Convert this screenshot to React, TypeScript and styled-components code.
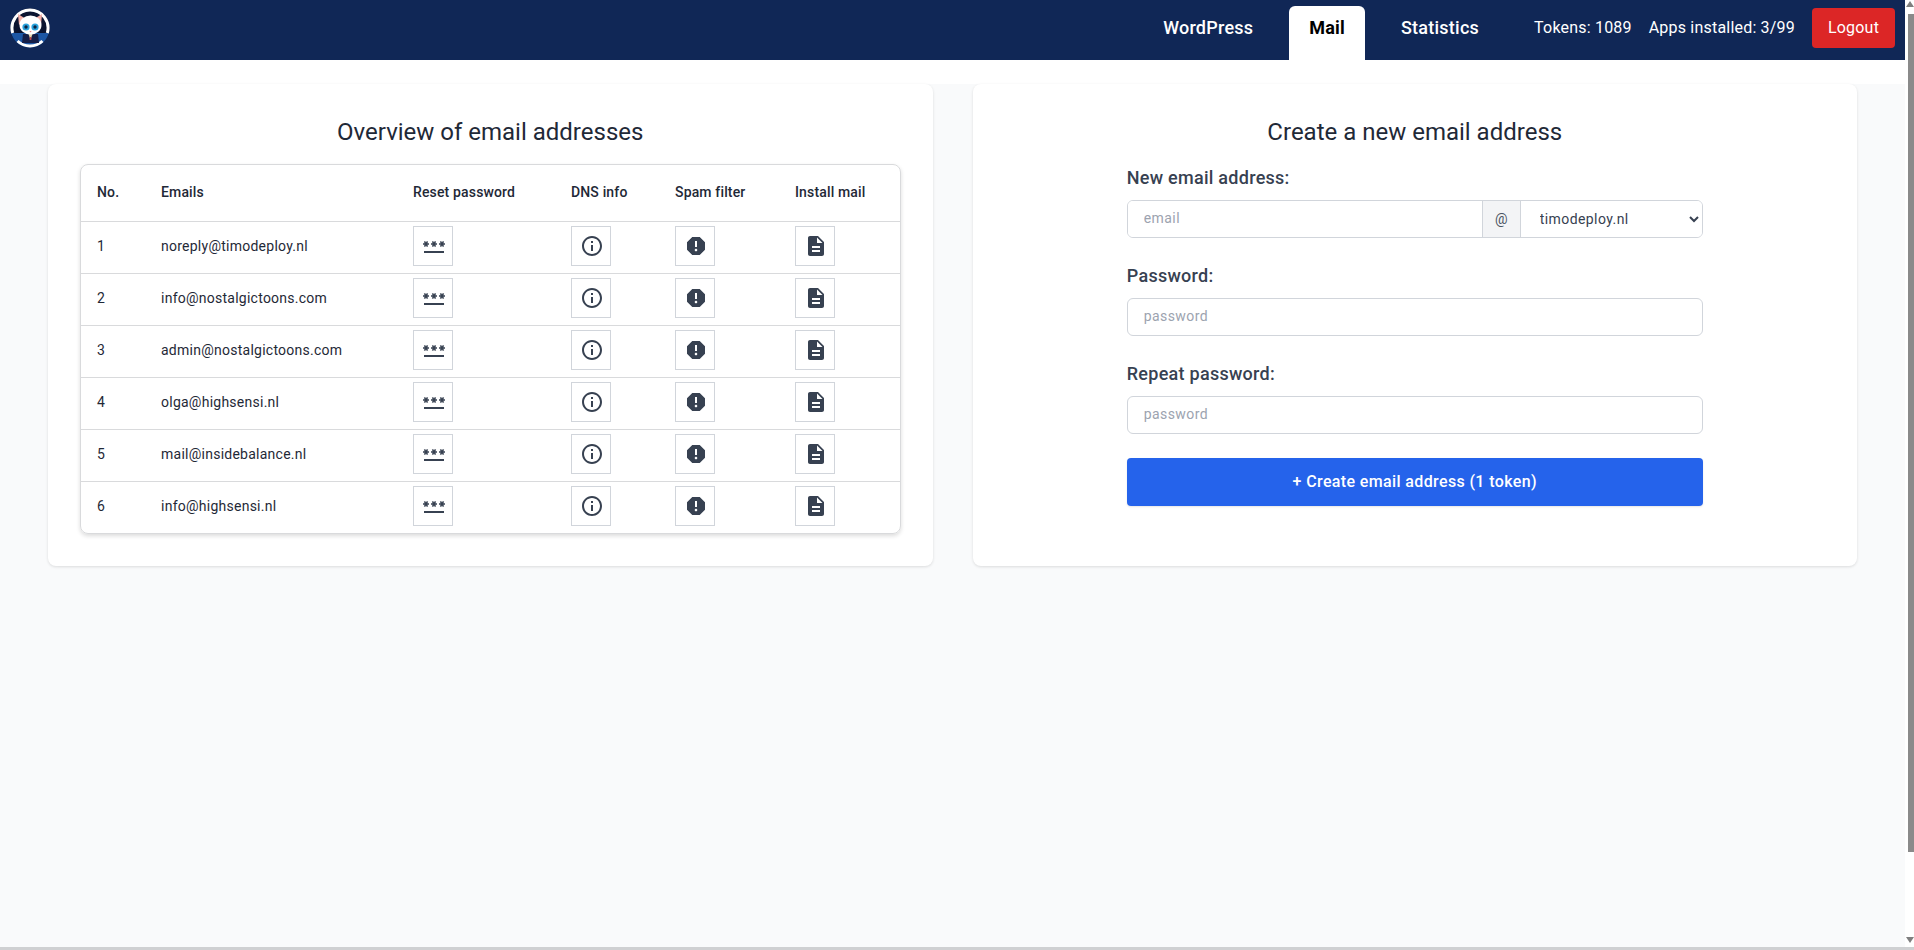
import React from "react";
import styled, { createGlobalStyle } from "styled-components";
import { MdPassword, MdInfoOutline, MdReport, MdDescription } from "react-icons/md";

const GlobalStyle = createGlobalStyle`
  html, body, #root {
    margin: 0;
    height: 100%;
  }
  body {
    overflow: hidden;
    background: #ffffff;
    font-family: Roboto, "Liberation Sans", sans-serif;
    color: #374151;
  }
  * {
    box-sizing: border-box;
  }
`;

const Window = styled.div`
  height: 950px;
  display: flex;
  flex-direction: column;
`;

const Viewport = styled.div`
  flex: 1;
  min-height: 0;
  display: flex;
`;

const WindowEdge = styled.div`
  height: 3px;
  background: #cfd0d2;
`;

const Page = styled.div`
  flex: 1;
  min-width: 0;
  display: flex;
  flex-direction: column;
  background: #f9fafb;
`;

const Rail = styled.div`
  width: 9px;
  background: #ffffff;
  display: flex;
  flex-direction: column;
  align-items: flex-end;
  padding: 1px 0 4px;
`;

const RailArrow = styled.div<{ $down?: boolean }>`
  width: 0;
  height: 0;
  border-left: 4px solid transparent;
  border-right: 4px solid transparent;
  ${p =>
    p.$down
      ? "border-top: 6px solid #7f7f7f; margin-top: auto;"
      : "border-bottom: 6px solid #7f7f7f;"}
`;

const RailThumb = styled.div`
  width: 6px;
  height: 838px;
  margin-top: 7px;
  background: #8a8a8a;
`;

const Nav = styled.nav`
  height: 60px;
  flex-shrink: 0;
  background: #102756;
  display: flex;
  align-items: flex-end;
  padding: 0 10px 0 10px;
`;

const Logo = styled.svg`
  width: 40px;
  height: 40px;
  align-self: center;
  margin-top: -4px;
`;

const Tabs = styled.div`
  margin-left: auto;
  display: flex;
  gap: 16px;
  align-items: flex-end;
`;

const Tab = styled.a<{ $active?: boolean }>`
  height: 54px;
  padding: 0 20px 12px;
  display: flex;
  align-items: center;
  font-size: 18px;
  font-weight: ${p => (p.$active ? 700 : 500)};
  letter-spacing: ${p => (p.$active ? "0.15px" : "0.25px")};
  color: ${p => (p.$active ? "#000000" : "#ffffff")};
  background: ${p => (p.$active ? "#ffffff" : "transparent")};
  border-radius: 6px 6px 0 0;
`;

const NavInfo = styled.div`
  margin-left: 35px;
  align-self: center;
  display: flex;
  align-items: center;
  gap: 17px;
  margin-top: -4px;
  font-size: 16px;
  letter-spacing: 0.2px;
  color: #ffffff;
`;

const NavText = styled.span`
  padding-bottom: 2px;
`;

const LogoutButton = styled.button`
  width: 83px;
  height: 40px;
  padding: 0 0 2px;
  border: 0;
  border-radius: 4px;
  background: #dc2626;
  color: #ffffff;
  font-family: inherit;
  font-size: 16px;
  font-weight: 400;
  letter-spacing: 0.22px;
`;

const WhiteStrip = styled.div`
  height: 24px;
  flex-shrink: 0;
  background: #ffffff;
`;

const Cards = styled.main`
  display: grid;
  grid-template-columns: 1fr 1fr;
  gap: 40px;
  padding: 0 48px;
`;

const Card = styled.section`
  height: 482px;
  padding: 32px;
  background: #ffffff;
  border-radius: 8px;
  box-shadow: 0 1px 3px rgba(0, 0, 0, 0.12);
`;

const CardTitle = styled.h2`
  margin: 0 0 16px;
  font-size: 24px;
  line-height: 32px;
  font-weight: 400;
  text-align: center;
  color: #1f2937;
`;

const TableWrap = styled.div`
  border: 1px solid #d9dadc;
  border-radius: 8px;
  box-shadow: 0 2px 4px rgba(0, 0, 0, 0.14);
  overflow: hidden;
`;

const Table = styled.table`
  width: 100%;
  border-collapse: collapse;
  table-layout: fixed;
  font-size: 14px;
`;

const HeadCell = styled.th<{ $width?: number }>`
  width: ${p => (p.$width ? `${p.$width}px` : "auto")};
  height: 56px;
  padding: 0 16px 2px;
  text-align: left;
  font-weight: 500;
  letter-spacing: 0.01071em;
  color: #1f2937;
  white-space: nowrap;
`;

const Row = styled.tr`
  border-top: 1px solid #d9dadc;
`;

const Cell = styled.td`
  height: 52px;
  padding: 0 16px 2px;
  color: #1f2937;
  letter-spacing: 0.25px;
  vertical-align: middle;
`;

const IconButton = styled.button`
  width: 40px;
  height: 40px;
  padding: 0 0 0 2px;
  display: flex;
  align-items: center;
  justify-content: center;
  background: #ffffff;
  border: 1px solid #d1d5db;
  color: #374151;
  font-size: 24px;
`;

const Form = styled.form`
  width: 576px;
  margin: 0 auto;
`;

const Field = styled.div`
  margin-bottom: 24px;
`;

const Label = styled.label`
  display: block;
  margin-bottom: 8px;
  font-size: 18px;
  line-height: 28px;
  font-weight: 500;
  letter-spacing: 0.27px;
  color: #374151;
`;

const Input = styled.input`
  display: block;
  width: 100%;
  height: 38px;
  padding: 0 16px 2px;
  border: 1px solid #d1d5db;
  border-radius: 6px;
  background: #ffffff;
  font-family: inherit;
  font-size: 14px;
  letter-spacing: 0.03em;
  &::placeholder {
    color: #9ca3af;
    opacity: 1;
  }
`;

const InputGroup = styled.div`
  display: flex;
  height: 38px;
  border: 1px solid #d1d5db;
  border-radius: 6px;
  overflow: hidden;
`;

const GroupInput = styled(Input)`
  flex: 1;
  min-width: 0;
  height: 100%;
  border: 0;
  border-radius: 0;
`;

const AtSign = styled.span`
  width: 39px;
  display: flex;
  align-items: center;
  justify-content: center;
  background: #f3f4f6;
  border-left: 1px solid #d1d5db;
  border-right: 1px solid #d1d5db;
  font-size: 14px;
  color: #4b5563;
`;

const DomainSelect = styled.select`
  width: 181px;
  height: 100%;
  padding: 0 0 0 15px;
  border: 0;
  background: #ffffff;
  font-family: inherit;
  font-size: 14px;
  letter-spacing: 0.03em;
  color: #374151;
`;

const SubmitButton = styled.button`
  display: block;
  width: 100%;
  height: 48px;
  padding: 0 0 2px;
  border: 0;
  border-radius: 4px;
  background: #2563eb;
  color: #ffffff;
  font-family: inherit;
  font-size: 16px;
  font-weight: 500;
  letter-spacing: 0.37px;
  box-shadow: 0 1px 2px rgba(0, 0, 0, 0.1);
`;

const emails = [
  "noreply@timodeploy.nl",
  "info@nostalgictoons.com",
  "admin@nostalgictoons.com",
  "olga@highsensi.nl",
  "mail@insidebalance.nl",
  "info@highsensi.nl",
];

const columns: { label: string; width?: number }[] = [
  { label: "No.", width: 64 },
  { label: "Emails", width: 252 },
  { label: "Reset password", width: 158 },
  { label: "DNS info", width: 104 },
  { label: "Spam filter", width: 120 },
  { label: "Install mail" },
];

const CatLogo = () => (
  <Logo viewBox="0 0 40 40">
    <circle cx="20" cy="20" r="19.5" fill="#0b1430" />
    <path d="M1.2 25h37.6A19.5 19.5 0 0 1 20 39.5 19.5 19.5 0 0 1 1.2 25z" fill="#1c56a4" />
    <path d="M2.7 25A18 18 0 1 1 37.3 25" fill="none" stroke="#ffffff" strokeWidth="3" />
    <path d="M7.55 33A18 18 0 0 0 32.45 33" fill="none" stroke="#ffffff" strokeWidth="3" />
    <path d="M13 26h15l1 9H12z" fill="#141e48" />
    <path d="M18.5 26h4L20.5 32z" fill="#e8d9b0" />
    <path d="M19.6 29h1.8v3h-1.8z" fill="#b9474a" />
    <path d="M8 6l8 5-7 6z" fill="#f4b0a8" />
    <path d="M32 6l-8 5 7 6z" fill="#f4b0a8" />
    <ellipse cx="20.5" cy="17" rx="11" ry="9.5" fill="#ffffff" />
    <circle cx="16" cy="19" r="3.6" fill="#2aa3dd" />
    <circle cx="25" cy="19" r="3.6" fill="#2aa3dd" />
    <circle cx="16" cy="19" r="1.7" fill="#0c2544" />
    <circle cx="25" cy="19" r="1.7" fill="#0c2544" />
    <path d="M19.4 23h2.2L20.5 24.4z" fill="#e58a8a" />
  </Logo>
);

const App: React.FC = () => (
  <Window>
    <GlobalStyle />
    <Viewport>
      <Page>
        <Nav>
          <CatLogo />
          <Tabs>
            <Tab>WordPress</Tab>
            <Tab $active>Mail</Tab>
            <Tab>Statistics</Tab>
          </Tabs>
          <NavInfo>
            <NavText>Tokens: 1089</NavText>
            <NavText>Apps installed: 3/99</NavText>
            <LogoutButton type="button">Logout</LogoutButton>
          </NavInfo>
        </Nav>
        <WhiteStrip />
        <Cards>
          <Card>
            <CardTitle>Overview of email addresses</CardTitle>
            <TableWrap>
              <Table>
                <thead>
                  <tr>
                    {columns.map(col => (
                      <HeadCell key={col.label} $width={col.width}>
                        {col.label}
                      </HeadCell>
                    ))}
                  </tr>
                </thead>
                <tbody>
                  {emails.map((email, idx) => (
                    <Row key={email}>
                      <Cell>{idx + 1}</Cell>
                      <Cell>{email}</Cell>
                      <Cell>
                        <IconButton type="button">
                          <MdPassword />
                        </IconButton>
                      </Cell>
                      <Cell>
                        <IconButton type="button">
                          <MdInfoOutline />
                        </IconButton>
                      </Cell>
                      <Cell>
                        <IconButton type="button">
                          <MdReport />
                        </IconButton>
                      </Cell>
                      <Cell>
                        <IconButton type="button">
                          <MdDescription />
                        </IconButton>
                      </Cell>
                    </Row>
                  ))}
                </tbody>
              </Table>
            </TableWrap>
          </Card>
          <Card>
            <CardTitle>Create a new email address</CardTitle>
            <Form>
              <Field>
                <Label>New email address:</Label>
                <InputGroup>
                  <GroupInput placeholder="email" />
                  <AtSign>@</AtSign>
                  <DomainSelect defaultValue="timodeploy.nl">
                    <option>timodeploy.nl</option>
                    <option>nostalgictoons.com</option>
                    <option>highsensi.nl</option>
                    <option>insidebalance.nl</option>
                  </DomainSelect>
                </InputGroup>
              </Field>
              <Field>
                <Label>Password:</Label>
                <Input type="password" placeholder="password" />
              </Field>
              <Field>
                <Label>Repeat password:</Label>
                <Input type="password" placeholder="password" />
              </Field>
              <SubmitButton type="button">+ Create email address (1 token)</SubmitButton>
            </Form>
          </Card>
        </Cards>
      </Page>
      <Rail>
        <RailArrow />
        <RailThumb />
        <RailArrow $down />
      </Rail>
    </Viewport>
    <WindowEdge />
  </Window>
);

export default App;
